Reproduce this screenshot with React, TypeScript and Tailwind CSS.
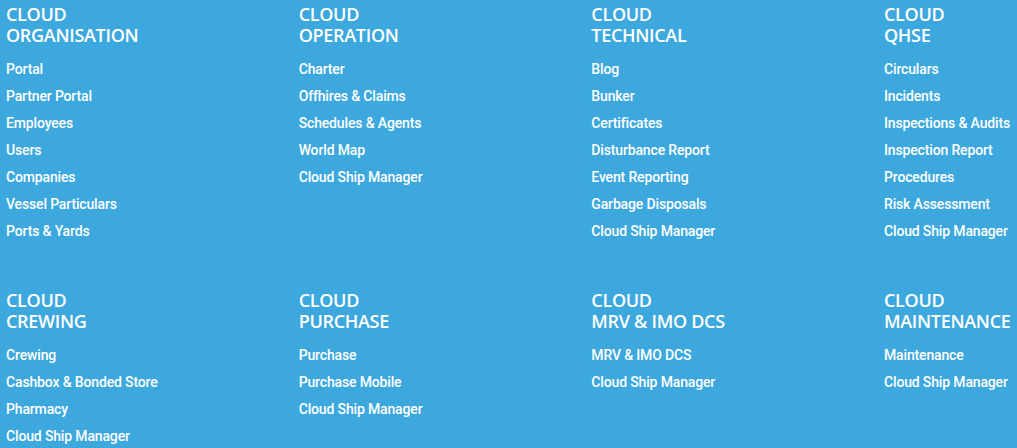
const sections = [
  {
    title: "ORGANISATION",
    links: ["Portal", "Partner Portal", "Employees", "Users", "Companies", "Vessel Particulars", "Ports & Yards"],
  },
  {
    title: "OPERATION",
    links: ["Charter", "Offhires & Claims", "Schedules & Agents", "World Map", "Cloud Ship Manager"],
  },
  {
    title: "TECHNICAL",
    links: [
      "Blog",
      "Bunker",
      "Certificates",
      "Disturbance Report",
      "Event Reporting",
      "Garbage Disposals",
      "Cloud Ship Manager",
    ],
  },
  {
    title: "QHSE",
    links: [
      "Circulars",
      "Incidents",
      "Inspections & Audits",
      "Inspection Report",
      "Procedures",
      "Risk Assessment",
      "Cloud Ship Manager",
    ],
  },
  {
    title: "CREWING",
    links: ["Crewing", "Cashbox & Bonded Store", "Pharmacy", "Cloud Ship Manager"],
  },
  {
    title: "PURCHASE",
    links: ["Purchase", "Purchase Mobile", "Cloud Ship Manager"],
  },
  {
    title: "MRV & IMO DCS",
    links: ["MRV & IMO DCS", "Cloud Ship Manager"],
  },
  {
    title: "MAINTENANCE",
    links: ["Maintenance", "Cloud Ship Manager"],
  },
];

function Section({ title, links }: { title: string; links: string[] }) {
  return (
    <div className="flex flex-col">
      <h3 className="font-['Open_Sans',sans-serif] text-[18px] leading-[21px] font-semibold tracking-[-0.3px] text-white">
        CLOUD
        <br />
        {title}
      </h3>
      <ul className="mt-[10px]">
        {links.map((l) => (
          <li
            key={l}
            className="font-['Roboto',sans-serif] text-[14px] leading-[27px] font-medium tracking-[-0.15px] text-white"
          >
            {l}
          </li>
        ))}
      </ul>
    </div>
  );
}

export default function App() {
  return (
    <div className="w-full h-[448px] overflow-hidden bg-[#3da8de]">
      <div className="grid grid-cols-[repeat(4,292.67px)] gap-y-[45px] pl-[6px] pt-[4px]">
        {sections.map((s) => (
          <Section key={s.title} title={s.title} links={s.links} />
        ))}
      </div>
    </div>
  );
}
